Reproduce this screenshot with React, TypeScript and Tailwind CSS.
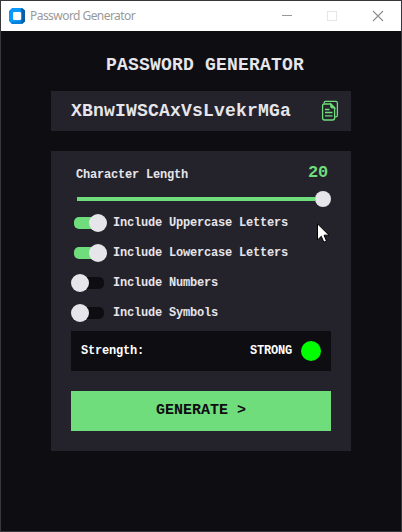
import { useState } from "react";

const MONO = "font-['Liberation_Mono',monospace] font-bold";

function AppIcon() {
  return (
    <svg width="16" height="16" viewBox="0 0 16 16">
      <path d="M3 0H13L16 2.5V13.5L13 16H3L0 13V3Z" fill="#0a98fb" />
      <path d="M13 0L16 2.5V13.5L13 16L11.5 13L13 11V5L11.5 2Z" fill="#0560aa" />
      <path d="M11.5 13L13 16H3L1.5 14.5Z" fill="#087fd8" />
      <rect x="4" y="4" width="8" height="8" rx="1.2" fill="#fff" />
    </svg>
  );
}

function TitleBar() {
  return (
    <header className="flex h-[30px] items-center bg-white pl-2">
      <AppIcon />
      <span className="ml-[5px] font-['Noto_Sans',sans-serif] text-[12px] leading-4 tracking-[-0.55px] text-[#999999]">
        Password Generator
      </span>
      <svg className="ml-auto mr-[17px]" width="102" height="12" viewBox="0 0 102 12" fill="none">
        <path d="M0 5.5H10" stroke="#999" />
        <rect x="45.5" y="1.5" width="9" height="9" stroke="#e6e6e6" />
        <path d="M91 1L101 11M101 1L91 11" stroke="#8c8c8c" strokeWidth="1.1" />
      </svg>
    </header>
  );
}

function CopyIcon() {
  return (
    <svg width="18" height="22" viewBox="0 0 18 22" fill="none" stroke="#6fdd7b" strokeWidth="1.3">
      <path d="M3.2 3.2V2.6Q3.2 1.4 4.4 1.4H14.8Q16.4 1.4 16.4 3V15.2Q16.4 16.8 14.8 16.8H13.8" />
      <path d="M3 4H9.8L13.6 7.8V18Q13.6 20 11.6 20H3.4Q1.6 20 1.6 18V5.6Q1.6 4 3 4Z" />
      <path d="M9.8 4V6.2Q9.8 7.8 11.4 7.8H13.6Z" fill="#6fdd7b" />
      <path d="M4 9.5H8.5M4 12.5H11.5M4 15.9H11.5" strokeWidth="1.4" />
    </svg>
  );
}

function Toggle({ label, initial }: { label: string; initial: boolean }) {
  const [on, setOn] = useState(initial);
  return (
    <button
      type="button"
      role="switch"
      aria-checked={on}
      onClick={() => setOn(!on)}
      className="flex h-[30px] items-center text-left"
    >
      <span
        className={`ml-[3px] flex h-3 w-[30px] items-center rounded-[5px] ${
          on ? "justify-end bg-[#6fdd7b]" : "justify-start bg-[#0e0d12]"
        }`}
      >
        <span className={`size-[18px] shrink-0 rounded-full bg-[#e6e5ea] ${on ? "-mr-[3px]" : "-ml-[3px]"}`} />
      </span>
      <span className="ml-[9px] text-[12px] leading-4 tracking-[-0.2px] text-[#e6e5ea]">{label}</span>
    </button>
  );
}

const OPTIONS = [
  { label: "Include Uppercase Letters", initial: true },
  { label: "Include Lowercase Letters", initial: true },
  { label: "Include Numbers", initial: false },
  { label: "Include Symbols", initial: false },
];

function EdgeTraces() {
  return (
    <svg className="absolute -left-px -top-px" width="402" height="532" viewBox="0 0 402 532" fill="none">
      <path d="M0.5 37V40M0.5 74V80M0.5 207V216M0.5 273V280M0.5 297V304M0.5 363V370M0.5 405V413" stroke="#547b8f" />
      <path d="M401.5 26V29M401.5 64V68M401.5 101V109M401.5 140V145M401.5 214V221M401.5 405V407" stroke="#4d86ad" />
      <path d="M401.5 196V201M401.5 233V239" stroke="#6b9c8c" />
    </svg>
  );
}

export default function App() {
  return (
    <div className="relative h-[532px] w-[402px] overflow-hidden border border-[#38373b] bg-[#0e0d12]">
      <TitleBar />
      <main className={`flex flex-col px-[50px] ${MONO}`}>
        <h1 className="mt-6 h-5 whitespace-nowrap pl-2 text-center text-[18px] leading-5 tracking-[0.2px] text-[#e6e5ea]">
          PASSWORD GENERATOR
        </h1>
        <div className="mt-4 flex h-10 items-center justify-between bg-[#24232b] pl-5 pr-3">
          <span className="text-[18px] leading-5 tracking-[0.2px] text-[#e6e5ea]">XBnwIWSCAxVsLvekrMGa</span>
          <CopyIcon />
        </div>
        <section className="mt-5 flex h-[300px] flex-col bg-[#24232b] px-5">
          <div className="flex h-[39px] items-center justify-between pl-[5px] pr-[3px] pt-[3px]">
            <span className="mt-[5px] text-[12px] leading-4 tracking-[-0.2px] text-[#e6e5ea]">Character Length</span>
            <span className="mt-[2px] text-[17px] leading-5 tracking-[-0.2px] text-[#6fdd7b]">20</span>
          </div>
          <div className="flex h-[18px] items-center pl-[6px]">
            <div className="h-1 flex-1 bg-[#6fdd7b]" />
            <div className="size-4 rounded-full bg-[#e6e5ea]" />
          </div>
          <div className="flex flex-col">
            {OPTIONS.map((option) => (
              <Toggle key={option.label} {...option} />
            ))}
          </div>
          <div className="mt-[3px] flex h-10 items-center bg-[#0e0d12] px-[10px] text-[12px] leading-4 tracking-[-0.2px] text-white">
            <span>Strength:</span>
            <span className="ml-auto">STRONG</span>
            <span className="ml-[9px] size-5 rounded-full bg-[#00ff00]" />
          </div>
          <button
            type="button"
            className="mt-5 h-10 bg-[#6fdd7b] pb-px text-center text-[15px] leading-5 text-[#0e0d12]"
          >
            GENERATE &gt;
          </button>
        </section>
      </main>
      <EdgeTraces />
      <svg className="absolute left-[316px] top-[222px]" width="13" height="21" viewBox="0 0 13 21">
        <path
          d="M0.5 0.8V17L4.3 13.3L6.8 19.2L9.5 18L7 12.2H12Z"
          fill="#fff"
          stroke="#000"
          strokeWidth="1"
        />
      </svg>
    </div>
  );
}
